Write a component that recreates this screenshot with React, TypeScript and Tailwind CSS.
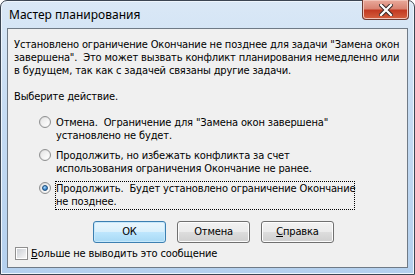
import type { ReactNode } from "react";

const bodyFont = { fontFamily: "'DejaVu Sans Condensed', 'DejaVu Sans', sans-serif" };

function Radio({ checked }: { checked?: boolean }) {
  return (
    <span className="relative mt-[1px] flex h-[12px] w-[12px] shrink-0 items-center justify-center rounded-full border border-[#8f9091] bg-[linear-gradient(135deg,#d8d8d8,#f8f8f8)]">
      <span className="h-[8px] w-[8px] rounded-full bg-[linear-gradient(135deg,#e6e6e6,#ffffff)]" />
      {checked && (
        <span className="absolute left-[2px] top-[2px] h-[6px] w-[6px] rounded-full border border-[#1f4f7c] bg-[radial-gradient(circle_at_40%_35%,#a9dcff,#2a77c4_70%)]" />
      )}
    </span>
  );
}

function Option({ checked, focused, children }: { checked?: boolean; focused?: boolean; children: ReactNode }) {
  return (
    <div className="flex items-start gap-[4px] pl-[25px]">
      <Radio checked={checked} />
      <div
        className={
          focused
            ? "w-[300px] whitespace-nowrap border border-dotted border-black pb-[1px] leading-[13px]"
            : "whitespace-nowrap border border-transparent leading-[13px]"
        }
      >
        {children}
      </div>
    </div>
  );
}

function Btn({ children, primary }: { children: ReactNode; primary?: boolean }) {
  return (
    <div
      className={
        primary
          ? "flex h-[22px] w-[73px] items-center justify-center rounded-[3px] border border-[#3c7fb1] bg-[linear-gradient(to_bottom,#eaf6fd_0%,#d9f0fc_50%,#bee6fd_51%,#a7d9f5_100%)] shadow-[inset_0_0_0_1px_#c6e8fb]"
          : "flex h-[22px] w-[73px] items-center justify-center rounded-[3px] border border-[#707070] bg-[linear-gradient(to_bottom,#f2f2f2_0%,#ebebeb_50%,#dddddd_51%,#cfcfcf_100%)] shadow-[inset_0_0_0_1px_#fcfcfc]"
      }
    >
      {children}
    </div>
  );
}

export default function App() {
  return (
    <div className="relative h-[275px] w-[415px] overflow-hidden bg-white">
      <div className="flex h-[275px] w-[415px] flex-col rounded-t-[7px] border border-[#3b4552] bg-[linear-gradient(to_bottom,#dae8f6_0%,#c6dcf3_40%,#b4d0ee_100%)] px-[6px] pb-[6px] shadow-[inset_0_0_0_1px_#eef5fc]">
        {/* title bar */}
        <div className="relative flex h-[27px] shrink-0 items-center pl-[2px]">
          <span className="text-[12px] text-black" style={{ fontFamily: "'Noto Sans', sans-serif" }}>
            Мастер планирования
          </span>
          <div className="absolute right-[-1px] top-[-1px] flex h-[20px] w-[47px] items-center justify-center rounded-b-[4px] border border-t-0 border-[#6e3b32] bg-[linear-gradient(to_bottom,#e9a99b_0%,#d98473_45%,#c33a22_55%,#d4603f_100%)] shadow-[inset_0_0_0_1px_#f2c3b8]">
            <svg width="14" height="12" viewBox="0 0 14 12">
              <path d="M2 1 L12 11 M12 1 L2 11" stroke="#3a2a28" strokeWidth="4.2" strokeLinecap="square" />
              <path d="M2 1 L12 11 M12 1 L2 11" stroke="#ffffff" strokeWidth="2.2" strokeLinecap="square" />
            </svg>
          </div>
        </div>

        {/* client area */}
        <div
          className="flex flex-1 flex-col border border-[#6f7a86] bg-[#f0f0f0] pl-[6px] pt-[9px] text-[11px] tracking-[-0.15px] text-black"
          style={bodyFont}
        >
          <div className="whitespace-nowrap leading-[13px]">
            Установлено ограничение Окончание не позднее для задачи "Замена окон
            <br />
            завершена".&nbsp; Это может вызвать конфликт планирования немедленно или
            <br />в будущем, так как с задачей связаны другие задачи.
          </div>

          <div className="mt-[13px] leading-[13px]">Выберите действие.</div>

          <div className="mt-[12px] flex flex-col gap-[5px]">
            <Option>
              Отмена.&nbsp; Ограничение для "Замена окон завершена"
              <br />
              установлено не будет.
            </Option>
            <Option>
              Продолжить, но избежать конфликта за счет
              <br />
              использования ограничения Окончание не ранее.
            </Option>
            <Option checked focused>
              Продолжить.&nbsp; Будет установлено ограничение Окончание
              <br />
              не позднее.
            </Option>
          </div>

          <div className="mt-[11px] flex gap-[11px] pl-[79px]">
            <Btn primary>ОК</Btn>
            <Btn>Отмена</Btn>
            <Btn>
              <span>
                <span className="underline">С</span>правка
              </span>
            </Btn>
          </div>

          <div className="mt-[4px] flex items-center gap-[3px] pl-[1px]">
            <span className="flex h-[13px] w-[13px] items-center justify-center border border-[#8f8f8f] bg-white">
              <span className="h-[9px] w-[9px] bg-[linear-gradient(135deg,#cbcfd5,#f6f6f6)]" />
            </span>
            <span className="leading-[13px]">
              <span className="underline">Б</span>ольше не выводить это сообщение
            </span>
          </div>
        </div>
      </div>
    </div>
  );
}
